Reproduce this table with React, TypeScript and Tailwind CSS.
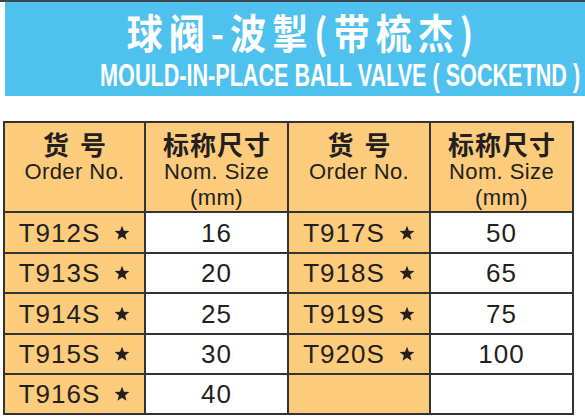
import React from 'react';

const ROWS: [string | null, string | null, string | null, string | null][] = [
  ['T912S', '16', 'T917S', '50'],
  ['T913S', '20', 'T918S', '65'],
  ['T914S', '25', 'T919S', '75'],
  ['T915S', '30', 'T920S', '100'],
  ['T916S', '40', null, null],
];

const Star = () => (
  <svg width="16" height="16" viewBox="0 0 24 24" className="shrink-0">
    <polygon
      points="12,1 14.9,8.6 23,9 16.7,14.1 18.8,22 12,17.6 5.2,22 7.3,14.1 1,9 9.1,8.6"
      fill="#231f20"
    />
  </svg>
);

const cjk = { fontFamily: '"Noto Sans CJK SC", "Noto Sans", sans-serif' };
const latin = { fontFamily: '"Liberation Sans", Arial, sans-serif' };

function OrderCell({ code }: { code: string | null }) {
  return (
    <div className="bg-[#fccb7b] flex items-center justify-center text-[#231f20]">
      {code && (
        <div className="flex items-center gap-[14px]">
          <span className="text-[26px] tracking-[1px] leading-none" style={latin}>{code}</span>
          <Star />
        </div>
      )}
    </div>
  );
}

function SizeCell({ size }: { size: string | null }) {
  return (
    <div className="bg-white flex items-center justify-center text-[#231f20]">
      <span className="text-[26px] tracking-[1px] leading-none" style={latin}>{size}</span>
    </div>
  );
}

function HeaderOrder() {
  return (
    <div className="bg-[#fccb7b] flex flex-col items-center pt-[6px] text-[#231f20]">
      <div className="text-[26px] leading-[30px] font-bold tracking-[11px] pl-[11px]" style={cjk}>货号</div>
      <div className="text-[22px] leading-[26px] tracking-[0.4px]" style={latin}>Order No.</div>
    </div>
  );
}

function HeaderSize() {
  return (
    <div className="bg-[#fccb7b] flex flex-col items-center pt-[6px] text-[#231f20]">
      <div className="text-[26px] leading-[30px] font-bold tracking-[1px] pl-[1px]" style={cjk}>标称尺寸</div>
      <div className="text-[22px] leading-[26px] tracking-[0.4px]" style={latin}>Nom. Size</div>
      <div className="text-[22px] leading-[26px] tracking-[0.4px]" style={latin}>(mm)</div>
    </div>
  );
}

export default function App() {
  return (
    <div className="w-[585px] h-[419px] bg-white overflow-hidden">
      <div className="h-[2px] bg-[#3b4852]" />
      <div className="ml-[5px] h-[94px] bg-[#4fc1ee] flex flex-col text-white">
        <div className="h-[57px] flex items-center justify-center pl-[16px]">
          <div
            className="text-[36px] leading-[44px] font-bold tracking-[6px] scale-y-[1.14] whitespace-pre"
            style={cjk}
          >
            球阀-波掣(带梳杰)
          </div>
        </div>
        <div className="flex justify-end pr-[5px]">
          <div
            className="shrink-0 text-[32px] leading-[32px] font-bold origin-right scale-x-[0.675] whitespace-pre"
            style={latin}
          >
            MOULD-IN-PLACE BALL VALVE ( SOCKETND )
          </div>
        </div>
      </div>
      <div className="mt-[25px] ml-[3px] w-[571px] border-2 border-[#333333] bg-[#333333] grid grid-cols-[139px_141px_140px_141px] grid-rows-[88px_39px_38px_39px_38px_38px] gap-[2px]">
        <HeaderOrder />
        <HeaderSize />
        <HeaderOrder />
        <HeaderSize />
        {ROWS.map((r, i) => (
          <React.Fragment key={i}>
            <OrderCell code={r[0]} />
            <SizeCell size={r[1]} />
            <OrderCell code={r[2]} />
            <SizeCell size={r[3]} />
          </React.Fragment>
        ))}
      </div>
    </div>
  );
}
